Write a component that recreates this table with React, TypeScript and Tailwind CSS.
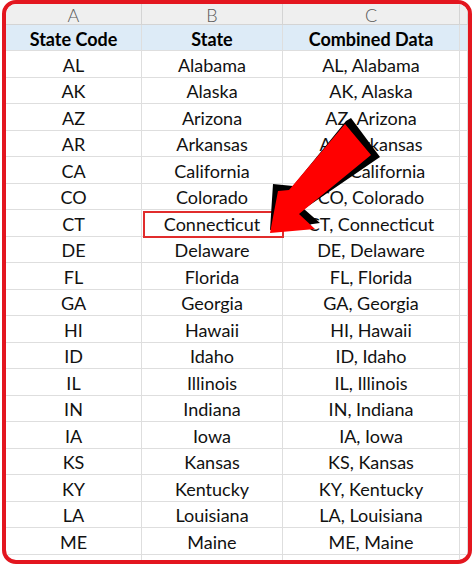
import React from "react";

const rows: [string, string][] = [
  ["AL", "Alabama"],
  ["AK", "Alaska"],
  ["AZ", "Arizona"],
  ["AR", "Arkansas"],
  ["CA", "California"],
  ["CO", "Colorado"],
  ["CT", "Connecticut"],
  ["DE", "Delaware"],
  ["FL", "Florida"],
  ["GA", "Georgia"],
  ["HI", "Hawaii"],
  ["ID", "Idaho"],
  ["IL", "Illinois"],
  ["IN", "Indiana"],
  ["IA", "Iowa"],
  ["KS", "Kansas"],
  ["KY", "Kentucky"],
  ["LA", "Louisiana"],
  ["ME", "Maine"],
];

const cell = "flex items-center justify-center pt-[3px] border-r border-b border-[#dedede] whitespace-nowrap";

export default function App() {
  return (
    <div
      className="relative w-[474px] h-[564px] bg-white overflow-hidden text-[#111]"
      style={{ fontFamily: "Lato, 'Liberation Sans', sans-serif" }}
    >
      <div className="ml-[2px] w-[470px] h-[564px] border-[4px] border-[#e3161f] rounded-[14px] overflow-hidden bg-white">
        <div className="grid grid-cols-[136px_141px_177px_1fr]">
          {["A", "B", "C", ""].map((l, i) => (
            <div
              key={"h" + i}
              className="h-[21px] flex items-center justify-center pt-[2px] bg-[#efefef] border-r border-b border-[#d4d4d4] text-[18px] font-light text-[#5a5a5a]"
            >
              {l}
            </div>
          ))}
          {["State Code", "State", "Combined Data", ""].map((l, i) => (
            <div
              key={"t" + i}
              className={`h-[26px] ${cell} bg-[#ddebf7] text-[18px] font-bold text-black`}
            >
              {l}
            </div>
          ))}
          {rows.map(([c, s]) => (
            <React.Fragment key={c}>
              <div className={`h-[26.5px] ${cell} text-[18px]`}>{c}</div>
              <div className={`h-[26.5px] ${cell} text-[18px]`}>{s}</div>
              <div className={`h-[26.5px] ${cell} text-[18px]`}>{`${c}, ${s}`}</div>
              <div className={`h-[26.5px] ${cell}`}></div>
            </React.Fragment>
          ))}
          {[0, 1, 2, 3].map((i) => (
            <div key={"e" + i} className={`h-[26.5px] ${cell}`}></div>
          ))}
        </div>
      </div>
      <div className="absolute left-[143px] top-[211px] w-[141px] h-[27px] border-2 border-[#e12c2c]"></div>
      <svg className="absolute left-0 top-0" width="474" height="564" viewBox="0 0 474 564">
        <polygon
          points="270,230 273,184 293,186 346,121 351,118 380,157 304,209 320,223"
          fill="#000"
        />
        <polygon
          points="270,233 278,191 289,190 345,124 371,155 299,214 315,229"
          fill="#ff0000"
        />
      </svg>
    </div>
  );
}
